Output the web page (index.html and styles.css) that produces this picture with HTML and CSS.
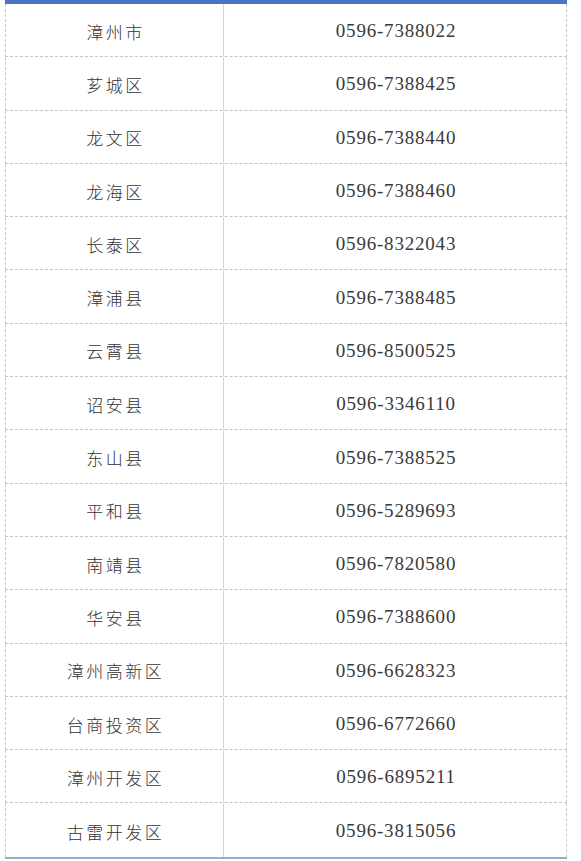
FILE: index.html
```html
<!DOCTYPE html>
<html lang="zh">
<head>
<meta charset="utf-8">
<title>漳州 电话</title>
<link rel="stylesheet" href="styles.css">
</head>
<body>
<div class="table">
  <div class="row"><div class="name">漳州市</div><div class="tel">0596-7388022</div></div>
  <div class="row"><div class="name">芗城区</div><div class="tel">0596-7388425</div></div>
  <div class="row"><div class="name">龙文区</div><div class="tel">0596-7388440</div></div>
  <div class="row"><div class="name">龙海区</div><div class="tel">0596-7388460</div></div>
  <div class="row"><div class="name">长泰区</div><div class="tel">0596-8322043</div></div>
  <div class="row"><div class="name">漳浦县</div><div class="tel">0596-7388485</div></div>
  <div class="row"><div class="name">云霄县</div><div class="tel">0596-8500525</div></div>
  <div class="row"><div class="name">诏安县</div><div class="tel">0596-3346110</div></div>
  <div class="row"><div class="name">东山县</div><div class="tel">0596-7388525</div></div>
  <div class="row"><div class="name">平和县</div><div class="tel">0596-5289693</div></div>
  <div class="row"><div class="name">南靖县</div><div class="tel">0596-7820580</div></div>
  <div class="row"><div class="name">华安县</div><div class="tel">0596-7388600</div></div>
  <div class="row"><div class="name">漳州高新区</div><div class="tel">0596-6628323</div></div>
  <div class="row"><div class="name">台商投资区</div><div class="tel">0596-6772660</div></div>
  <div class="row"><div class="name">漳州开发区</div><div class="tel">0596-6895211</div></div>
  <div class="row last"><div class="name">古雷开发区</div><div class="tel">0596-3815056</div></div>
</div>
</body>
</html>
```
FILE: styles.css
```css
html, body {
  margin: 0;
  padding: 0;
  background: #ffffff;
}
.table {
  margin-left: 5px;
  width: 562px;
  border-top: 4px solid #4a74c6;
  border-bottom: 2px solid #9aabc4;
  display: flex;
  flex-direction: column;
}
.row {
  display: grid;
  grid-template-columns: 218px 1fr;
  height: 53.3px;
  box-sizing: border-box;
  border-bottom: 1px dashed #c4c4c4;
  border-left: 1px dashed #c8c8c8;
  border-right: 1px dashed #c8c8c8;
}
.row.last {
  border-bottom: none;
}
.name, .tel {
  display: flex;
  align-items: center;
  justify-content: center;
  color: #333333;
  padding-top: 2px;
}
.name {
  border-right: 1px solid #c9d6ea;
  font-family: "Noto Sans CJK SC", "Noto Sans CJK JP", sans-serif;
  font-size: 17px;
  letter-spacing: 2.5px;
  font-weight: 300;
  padding-left: 2px;
}
.tel {
  font-family: "Liberation Serif", "Times New Roman", serif;
  font-size: 19px;
  letter-spacing: 0.8px;
  color: #3a3a3a;
  padding-left: 2px;
}
```
